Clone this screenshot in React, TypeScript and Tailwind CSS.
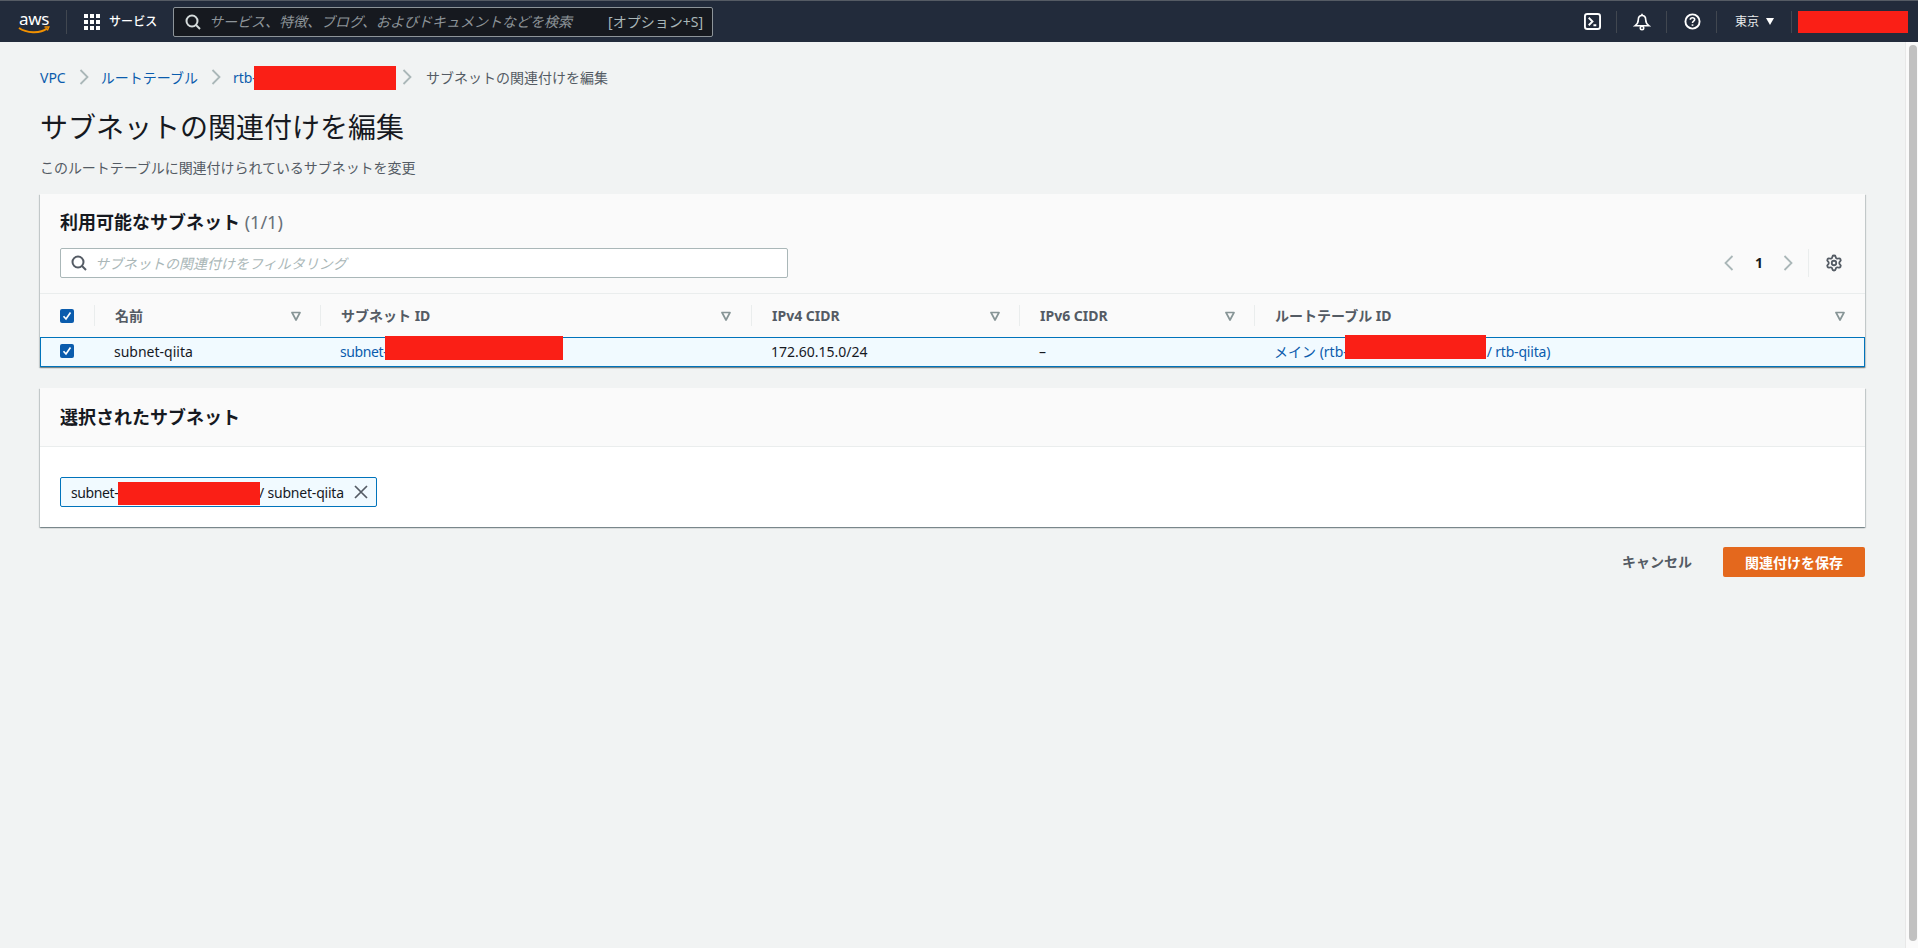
import { Settings } from "lucide-react";

const jp = "font-['Noto_Sans','Noto_Sans_CJK_JP',sans-serif]";

function Redact({ className }: { className: string }) {
  return <span className={`absolute bg-[#fa1f16] ${className}`} />;
}

function Chevron({ left = false }: { left?: boolean }) {
  return (
    <svg width="10" height="16" viewBox="0 0 10 16" className="shrink-0">
      <path d={left ? "M8.500 1 1.500 8l7 7" : "M1.500 1l7 7-7 7"} fill="none" stroke="#aab7b8" strokeWidth="1.800" />
    </svg>
  );
}

function SearchGlyph({ className }: { className: string }) {
  return (
    <svg width="16" height="16" viewBox="0 0 16 16" fill="none" stroke="currentColor" strokeWidth="2" className={`shrink-0 ${className}`}>
      <circle cx="7" cy="7" r="5.500" />
      <path d="m11 11 4 4" />
    </svg>
  );
}

function SortIcon() {
  return (
    <svg width="10" height="10" viewBox="0 0 10 10" className="shrink-0">
      <path d="M1 1.500h8L5 9z" fill="none" stroke="#879596" strokeWidth="1.700" strokeLinejoin="round" />
    </svg>
  );
}

function Check() {
  return (
    <span className="w-[14px] h-[14px] rounded-[2px] bg-[#0b5cad] flex items-center justify-center shrink-0">
      <svg width="10" height="10" viewBox="0 0 10 10">
        <path d="M1.500 5.200 4 8l4.500-6.500" fill="none" stroke="#fff" strokeWidth="1.700" />
      </svg>
    </span>
  );
}

function HeaderCell({ label, width, padRight }: { label: string; width: string; padRight: string }) {
  return (
    <div className={`${width} h-[21px] flex items-center justify-between border-l border-[#eaeded] pl-5 ${padRight}`}>
      <span className="font-bold text-[14px] text-[#545b64] mt-[-1px]">{label}</span>
      <SortIcon />
    </div>
  );
}

export default function App() {
  return (
    <div className={`${jp} w-[1918px] h-[948px] overflow-hidden flex flex-col bg-[#f1f3f3] text-[14px] text-[#16191f]`}>
      {/* Top bar */}
      <header className="h-[42px] shrink-0 bg-[#222b3b] border-t border-[#555b64] flex items-center text-white">
        <div className="ml-[18px] w-[32px] shrink-0 flex flex-col items-center pt-[2px]">
          <span className="text-[17px] leading-[15px] tracking-[-0.3px]">aws</span>
          <svg width="32" height="9" viewBox="0 0 32 9" className="block">
            <path d="M1 2c7 5 21 6 28 .5" fill="none" stroke="#f29100" strokeWidth="2" />
            <path d="M26.500 1h4.300l-1.500 3.500" fill="none" stroke="#f29100" strokeWidth="1.500" />
          </svg>
        </div>
        <div className="w-px h-[24px] bg-[#414750] ml-[16px]" />
        <div className="ml-[17px] grid grid-cols-3 gap-[2px] w-[16px] shrink-0">
          {Array.from({ length: 9 }).map((_, i) => (
            <span key={i} className="w-[4px] h-[4px] bg-white" />
          ))}
        </div>
        <span className="ml-[9px] w-[64px] text-[12px] font-medium tracking-[0.1px]">サービス</span>
        <div className="w-[540px] h-[30px] shrink-0 bg-[#16191f] border border-[#8d9499] rounded-[2px] flex items-center pl-[11px] pr-[9px]">
          <SearchGlyph className="text-[#d5dbdb]" />
          <span className="ml-[8px] italic text-[14px] text-[#8d9499]">サービス、特徴、ブログ、およびドキュメントなどを検索</span>
          <span className="ml-auto text-[14px] text-[#aab7b8]">[オプション+S]</span>
        </div>

        <div className="ml-auto flex items-center h-full">
          <div className="w-[50px] h-[22px] flex items-center justify-center border-r border-[#414750]">
            <svg width="17" height="17" viewBox="0 0 18 18" fill="none" stroke="#fff" strokeWidth="2" className="ml-[2px]">
              <rect x="1" y="1" width="16" height="16" rx="2.500" />
              <path d="m5 5 4 4-4 4M10 13h3" />
            </svg>
          </div>
          <div className="w-[50px] h-[22px] flex items-center justify-center border-r border-[#414750]">
            <svg width="18" height="18" viewBox="0 0 18 18" fill="none" stroke="#fff" strokeWidth="1.600" className="ml-[1px]">
              <path d="M9 2.500c2.500 0 3.700 2 3.700 4.300 0 2.800 1.200 4.500 3.300 6H2c2.100-1.500 3.300-3.200 3.300-6C5.300 4.500 6.500 2.500 9 2.500Z" />
              <circle cx="9" cy="15" r="1.700" />
              <path d="M9 .8v1.700" />
            </svg>
          </div>
          <div className="w-[50px] h-[22px] flex items-center justify-center border-r border-[#414750]">
            <svg width="17" height="17" viewBox="0 0 18 18" fill="none" stroke="#fff" strokeWidth="2" className="ml-[1px]">
              <circle cx="9" cy="9" r="7.500" />
              <path d="M6.700 7.200C6.700 5.800 7.700 5 9 5s2.300.8 2.300 2c0 1.700-2.300 1.700-2.300 3.500" strokeWidth="1.700" />
              <path d="M9 12v1.600" strokeWidth="1.800" />
            </svg>
          </div>
          <div className="w-[75px] h-[22px] flex items-center pl-[18px] border-r border-[#414750]">
            <span className="text-[12px] text-[#e9ebed]">東京</span>
            <svg width="8" height="7" viewBox="0 0 8 7" className="ml-[7px]">
              <path d="M0 0h8L4 7z" fill="#fff" />
            </svg>
          </div>
          <div className="ml-[6px] mr-[10px] w-[110px] h-[22px] bg-[#fa1f16]" />
        </div>
      </header>

      <div className="flex-1 flex min-h-0">
        <main className="w-[1905px] shrink-0 pl-[40px] pr-[40px] pt-[23px]">
          {/* Breadcrumb */}
          <nav className="h-[24px] flex items-center text-[14px] text-[#0b5cad]">
            <span>VPC</span>
            <span className="ml-[13px] mr-[12px] flex"><Chevron /></span>
            <span>ルートテーブル</span>
            <span className="ml-[13px] mr-[12px] flex"><Chevron /></span>
            <span className="relative w-[163px]">
              rtb-
              <Redact className="left-[21px] top-[-1px] w-[142px] h-[24px]" />
            </span>
            <span className="ml-[6px] mr-[14px] flex"><Chevron /></span>
            <span className="text-[#545b64]">サブネットの関連付けを編集</span>
          </nav>

          <h1 className="mt-[18px] text-[28px] leading-[40px] font-normal text-[#16191f]">サブネットの関連付けを編集</h1>
          <p className="mt-[10px] text-[14px] leading-[22px] text-[#545b64] tracking-[-0.05px]">このルートテーブルに関連付けられているサブネットを変更</p>

          {/* Available subnets */}
          <section className="mt-[15px] bg-[#fafafa] shadow-[0_1px_1px_0_rgba(0,28,36,0.3),1px_1px_1px_0_rgba(0,28,36,0.15),-1px_1px_1px_0_rgba(0,28,36,0.15)]">
            <div className="h-[100px] px-5 pt-[15px] border-b border-[#eaeded]">
              <h2 className="text-[18px] leading-[26px] font-bold text-[#16191f]">
                利用可能なサブネット <span className="font-normal text-[#687078]">(1/1)</span>
              </h2>
              <div className="mt-[13px] flex items-center">
                <div className="w-[728px] h-[30px] bg-white border border-[#aab7b8] rounded-[2px] flex items-center pl-[10px]">
                  <SearchGlyph className="text-[#545b64]" />
                  <span className="ml-[8px] italic text-[14px] text-[#aab7b8]">サブネットの関連付けをフィルタリング</span>
                </div>
                <div className="ml-auto mr-[2px] flex items-center text-[#16191f]">
                  <Chevron left />
                  <span className="ml-[21px] w-[7px] text-[14px] font-bold leading-none">1</span>
                  <span className="ml-[21px] flex"><Chevron /></span>
                  <div className="ml-[15px] w-px h-[28px] bg-[#eaeded]" />
                  <Settings size={18} strokeWidth={2.400} className="ml-[16px] text-[#545b64]" />
                </div>
              </div>
            </div>

            {/* Table header */}
            <div className="h-[43px] flex items-center">
              <div className="w-[54px] pl-5 flex">
                <Check />
              </div>
              <HeaderCell label="名前" width="w-[226px]" padRight="pr-[19px]" />
              <HeaderCell label="サブネット ID" width="w-[431px]" padRight="pr-[20px]" />
              <HeaderCell label="IPv4 CIDR" width="w-[268px]" padRight="pr-[19px]" />
              <HeaderCell label="IPv6 CIDR" width="w-[235px]" padRight="pr-[19px]" />
              <HeaderCell label="ルートテーブル ID" width="w-[611px]" padRight="pr-[20px]" />
            </div>

            {/* Selected row */}
            <div className="h-[30px] flex items-center bg-[#f1faff] border border-[#0073bb] pb-[2px] text-[14px]">
              <div className="w-[53px] pl-[19px] flex">
                <Check />
              </div>
              <div className="w-[226px] pl-5">subnet-qiita</div>
              <div className="w-[431px] pl-5 text-[#0b5cad] relative tracking-[-0.4px]">
                subnet-
                <Redact className="left-[65px] top-[-5px] w-[178px] h-[24px]" />
              </div>
              <div className="w-[268px] pl-5">172.60.15.0/24</div>
              <div className="w-[235px] pl-5">–</div>
              <div className="flex-1 pl-5 text-[#0b5cad] relative whitespace-nowrap">
                メイン (rtb-
                <Redact className="left-[91px] top-[-6px] w-[141px] h-[24px]" />
                <span className="ml-[139px] tracking-[-0.2px]">/ rtb-qiita)</span>
              </div>
            </div>
          </section>

          {/* Selected subnets */}
          <section className="mt-[21px] bg-white shadow-[0_1px_1px_0_rgba(0,28,36,0.3),1px_1px_1px_0_rgba(0,28,36,0.15),-1px_1px_1px_0_rgba(0,28,36,0.15)]">
            <div className="h-[59px] px-5 flex items-center bg-[#fafafa] border-b border-[#eaeded]">
              <h2 className="text-[18px] font-bold text-[#16191f]">選択されたサブネット</h2>
            </div>
            <div className="h-[80px] px-5 pt-[30px]">
              <div className="w-[317px] h-[30px] flex items-center bg-[#f1faff] border border-[#0073bb] rounded-[2px] pl-[10px] pr-[8px] relative whitespace-nowrap">
                <span className="w-[48px] tracking-[-0.4px]">subnet-</span>
                <Redact className="left-[57px] top-[4px] w-[142px] h-[23px]" />
                <span className="ml-[140px] tracking-[-0.2px]">/ subnet-qiita</span>
                <svg width="14" height="14" viewBox="0 0 14 14" className="ml-auto" fill="none" stroke="#545b64" strokeWidth="1.700">
                  <path d="m1 1 12 12M13 1 1 13" />
                </svg>
              </div>
            </div>
          </section>

          {/* Actions */}
          <div className="mt-[20px] flex items-center justify-end">
            <button className="font-bold text-[14px] text-[#545b64] mt-[-2px]">キャンセル</button>
            <button className="ml-[31px] w-[142px] h-[30px] bg-[#e4681d] rounded-[2px] text-white font-bold text-[14px]">関連付けを保存</button>
          </div>
        </main>

        {/* Scrollbar */}
        <div className="w-[13px] shrink-0 bg-[#fafafa] border-l border-[#e8e8e8] pl-[3px] pr-px pt-[3px] pb-[7px]">
          <div className="h-full rounded-full bg-[#c1c1c1]" />
        </div>
      </div>
    </div>
  );
}
